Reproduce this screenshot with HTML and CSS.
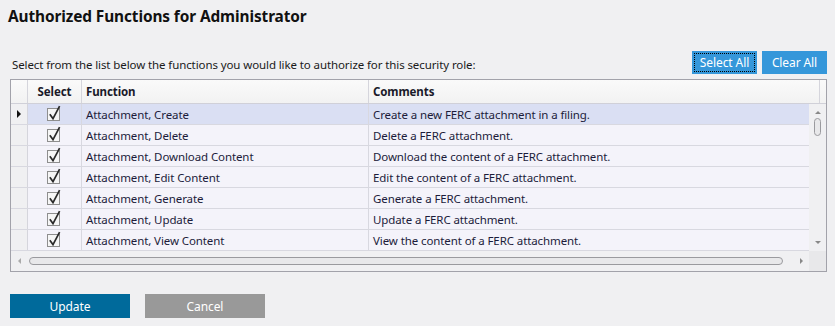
FILE: index.html
```html
<!DOCTYPE html>
<html lang="en">
<head>
  <meta charset="UTF-8">
  <title>Authorized Functions</title>
  <link rel="stylesheet" href="styles.css">
</head>
<body>
  <h1 class="title">Authorized Functions for Administrator</h1>

  <!-- toolbar -->
  <div class="toolbar">
    <span class="hint">Select from the list below the functions you would like to authorize for this security role:</span>
    <div class="toolbar-buttons">
      <button class="btn btn-light focused" type="button">Select All</button>
      <button class="btn btn-light" type="button">Clear All</button>
    </div>
  </div>

  <!-- grid -->
  <div class="grid">
    <div class="grid-head">
      <div class="hcell"></div>
      <div class="hcell center">Select</div>
      <div class="hcell">Function</div>
      <div class="hcell">Comments</div>
      <div class="hcell last"></div>
    </div>

    <div class="grid-main">
      <div class="rows">
        <div class="row current">
          <div class="rowhdr"><span class="marker"></span></div>
          <div class="cell center"><svg class="check" width="16" height="18" viewBox="0 0 16 18"><rect x="0.5" y="4.5" width="12" height="12" fill="#f6f6f6" stroke="#8e8e8e"/><path d="M2.8 10.2 L6 14.6 L12.6 2.2" fill="none" stroke="#2a2a2a" stroke-width="1.7"/></svg></div>
          <div class="cell">Attachment, Create</div>
          <div class="cell">Create a new FERC attachment in a filing.</div>
        </div>
        <div class="row">
          <div class="rowhdr"></div>
          <div class="cell center"><svg class="check" width="16" height="18" viewBox="0 0 16 18"><rect x="0.5" y="4.5" width="12" height="12" fill="#f6f6f6" stroke="#8e8e8e"/><path d="M2.8 10.2 L6 14.6 L12.6 2.2" fill="none" stroke="#2a2a2a" stroke-width="1.7"/></svg></div>
          <div class="cell">Attachment, Delete</div>
          <div class="cell">Delete a FERC attachment.</div>
        </div>
        <div class="row">
          <div class="rowhdr"></div>
          <div class="cell center"><svg class="check" width="16" height="18" viewBox="0 0 16 18"><rect x="0.5" y="4.5" width="12" height="12" fill="#f6f6f6" stroke="#8e8e8e"/><path d="M2.8 10.2 L6 14.6 L12.6 2.2" fill="none" stroke="#2a2a2a" stroke-width="1.7"/></svg></div>
          <div class="cell">Attachment, Download Content</div>
          <div class="cell">Download the content of a FERC attachment.</div>
        </div>
        <div class="row">
          <div class="rowhdr"></div>
          <div class="cell center"><svg class="check" width="16" height="18" viewBox="0 0 16 18"><rect x="0.5" y="4.5" width="12" height="12" fill="#f6f6f6" stroke="#8e8e8e"/><path d="M2.8 10.2 L6 14.6 L12.6 2.2" fill="none" stroke="#2a2a2a" stroke-width="1.7"/></svg></div>
          <div class="cell">Attachment, Edit Content</div>
          <div class="cell">Edit the content of a FERC attachment.</div>
        </div>
        <div class="row">
          <div class="rowhdr"></div>
          <div class="cell center"><svg class="check" width="16" height="18" viewBox="0 0 16 18"><rect x="0.5" y="4.5" width="12" height="12" fill="#f6f6f6" stroke="#8e8e8e"/><path d="M2.8 10.2 L6 14.6 L12.6 2.2" fill="none" stroke="#2a2a2a" stroke-width="1.7"/></svg></div>
          <div class="cell">Attachment, Generate</div>
          <div class="cell">Generate a FERC attachment.</div>
        </div>
        <div class="row">
          <div class="rowhdr"></div>
          <div class="cell center"><svg class="check" width="16" height="18" viewBox="0 0 16 18"><rect x="0.5" y="4.5" width="12" height="12" fill="#f6f6f6" stroke="#8e8e8e"/><path d="M2.8 10.2 L6 14.6 L12.6 2.2" fill="none" stroke="#2a2a2a" stroke-width="1.7"/></svg></div>
          <div class="cell">Attachment, Update</div>
          <div class="cell">Update a FERC attachment.</div>
        </div>
        <div class="row">
          <div class="rowhdr"></div>
          <div class="cell center"><svg class="check" width="16" height="18" viewBox="0 0 16 18"><rect x="0.5" y="4.5" width="12" height="12" fill="#f6f6f6" stroke="#8e8e8e"/><path d="M2.8 10.2 L6 14.6 L12.6 2.2" fill="none" stroke="#2a2a2a" stroke-width="1.7"/></svg></div>
          <div class="cell">Attachment, View Content</div>
          <div class="cell">View the content of a FERC attachment.</div>
        </div>
      </div>

      <!-- vertical scrollbar -->
      <div class="vscroll">
        <span class="arrow up"></span>
        <span class="vthumb"></span>
        <span class="arrow down"></span>
      </div>
    </div>

    <!-- horizontal scrollbar -->
    <div class="grid-foot">
      <div class="hscroll">
        <span class="arrow left"></span>
        <span class="hthumb"></span>
        <span class="arrow right"></span>
      </div>
      <div class="corner"></div>
    </div>
  </div>

  <div class="actions">
    <button class="btn btn-primary" type="button">Update</button>
    <button class="btn btn-muted" type="button">Cancel</button>
  </div>
</body>
</html>
```

FILE: styles.css
```css
body {
  margin: 0;
  padding: 0 8px 0 10px;
  background-color: #f0f0f2;
  font-family: "Noto Sans", "Open Sans", sans-serif;
  font-size: 11.5px;
  letter-spacing: -0.1px;
  color: #1a1a1a;
}

.title {
  margin: 7px 0 0 -2px;
  font-size: 15.4px;
  line-height: 20px;
  font-weight: bold;
  letter-spacing: -0.1px;
  color: #111;
}

/* toolbar above the grid */
.toolbar {
  display: flex;
  justify-content: space-between;
  align-items: flex-end;
  margin-top: 24px;
}

.hint {
  padding-left: 2px;
  padding-bottom: 1px;
  line-height: 16px;
  color: #1a1a1a;
}

.toolbar-buttons {
  display: flex;
  gap: 5px;
}

.btn {
  border: none;
  font-family: inherit;
  font-size: 12px;
  letter-spacing: -0.1px;
  color: #fff;
  cursor: pointer;
  padding: 0;
}

.btn-light {
  width: 65px;
  height: 23px;
  background-color: #3597da;
}

.btn-light.focused {
  outline: 1px dotted #000;
  outline-offset: -3px;
}

.btn-primary {
  width: 120px;
  height: 24px;
  background-color: #006a9b;
}

.btn-muted {
  width: 120px;
  height: 24px;
  background-color: #999;
}

/* grid */
.grid {
  margin-top: 5px;
  border: 1px solid #a2a2aa;
  background-color: #f0f0f2;
  color: #1c1c3a;
}

.grid-head {
  display: grid;
  grid-template-columns: 17px 54px 287px 451px 1fr;
  height: 23px;
  background: linear-gradient(#fafafa, #f2f2f2);
  border-bottom: 1px solid #d0d0d8;
}

.hcell {
  display: flex;
  align-items: center;
  padding-left: 4px;
  border-right: 1px solid #d5d5dc;
  font-weight: bold;
  color: #1a1a2a;
}

.hcell.last {
  border-right: none;
}

.hcell.center {
  justify-content: center;
  padding-left: 0;
}

.grid-main {
  display: flex;
  height: 147px;
}

.rows {
  flex: 1;
}

.row {
  display: grid;
  grid-template-columns: 17px 54px 287px 1fr;
  height: 21px;
  box-sizing: border-box;
  border-bottom: 1px solid #d8d8e0;
  background-color: #f4f3fa;
}

.row.current {
  background-color: #dadff3;
}

.rowhdr {
  display: flex;
  align-items: center;
  padding-left: 6px;
  background-color: #f0f0f2;
  border-right: 1px solid #d5d5dc;
}

.marker {
  width: 0;
  height: 0;
  border-top: 4px solid transparent;
  border-bottom: 4px solid transparent;
  border-left: 4px solid #111;
}

.cell {
  display: flex;
  align-items: center;
  padding-left: 4px;
  border-right: 1px solid #d8d8e0;
  white-space: nowrap;
  overflow: hidden;
}

.cell:last-child {
  border-right: none;
}

.cell.center {
  justify-content: center;
  padding-left: 0;
  padding-bottom: 3px;
}

/* scrollbars */
.vscroll {
  width: 17px;
  display: flex;
  flex-direction: column;
  align-items: center;
  background-color: #f0f0f2;
}

.vthumb {
  width: 5px;
  height: 16px;
  margin-top: 4px;
  border: 1px solid #9a9a9e;
  border-radius: 4px;
  background-color: #e8e8ea;
}

.arrow {
  width: 0;
  height: 0;
}

.arrow.up {
  margin-top: 7px;
  border-left: 3px solid transparent;
  border-right: 3px solid transparent;
  border-bottom: 3px solid #888;
}

.arrow.down {
  margin-top: auto;
  margin-bottom: 7px;
  border-left: 3px solid transparent;
  border-right: 3px solid transparent;
  border-top: 3px solid #888;
}

.grid-foot {
  display: flex;
  height: 20px;
}

.hscroll {
  flex: 1;
  display: flex;
  align-items: center;
  padding: 0 6px 0 7px;
}

.arrow.left {
  border-top: 3px solid transparent;
  border-bottom: 3px solid transparent;
  border-right: 3px solid #aaa;
}

.arrow.right {
  border-top: 3px solid transparent;
  border-bottom: 3px solid transparent;
  border-left: 3px solid #888;
}

.hthumb {
  flex: 1;
  height: 6px;
  margin: 0 17px 0 8px;
  border: 1px solid #9a9a9e;
  border-radius: 4px;
  background-color: #e8e8ea;
}

.corner {
  width: 17px;
  background-color: #e8e8ea;
}

.actions {
  display: flex;
  gap: 15px;
  margin-top: 22px;
}
```
